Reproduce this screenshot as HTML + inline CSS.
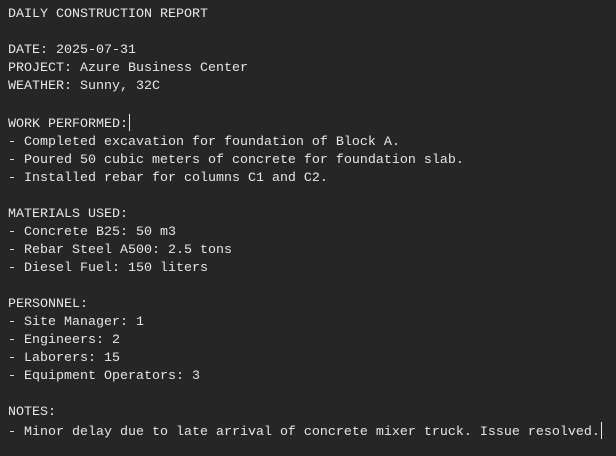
<!DOCTYPE html>
<html><head><meta charset="utf-8"><style>
html,body{margin:0;padding:0;background:#262626;width:616px;height:456px;overflow:hidden}
pre{margin:0;position:absolute;left:8px;top:6px;font-family:"Liberation Mono",monospace;font-size:13.33px;line-height:18px;color:#e6e6e6}
.c{display:inline-block;width:1px;height:17px;background:#e6e6e6;vertical-align:-4px;margin-left:1px}
</style></head><body><pre>DAILY CONSTRUCTION REPORT

DATE: 2025-07-31
PROJECT: Azure Business Center
WEATHER: Sunny, 32C

WORK PERFORMED:<span class="c"></span>
- Completed excavation for foundation of Block A.
- Poured 50 cubic meters of concrete for foundation slab.
- Installed rebar for columns C1 and C2.

MATERIALS USED:
- Concrete B25: 50 m3
- Rebar Steel A500: 2.5 tons
- Diesel Fuel: 150 liters

PERSONNEL:
- Site Manager: 1
- Engineers: 2
- Laborers: 15
- Equipment Operators: 3

NOTES:
- Minor delay due to late arrival of concrete mixer truck. Issue resolved.<span class="c"></span></pre></body></html>
